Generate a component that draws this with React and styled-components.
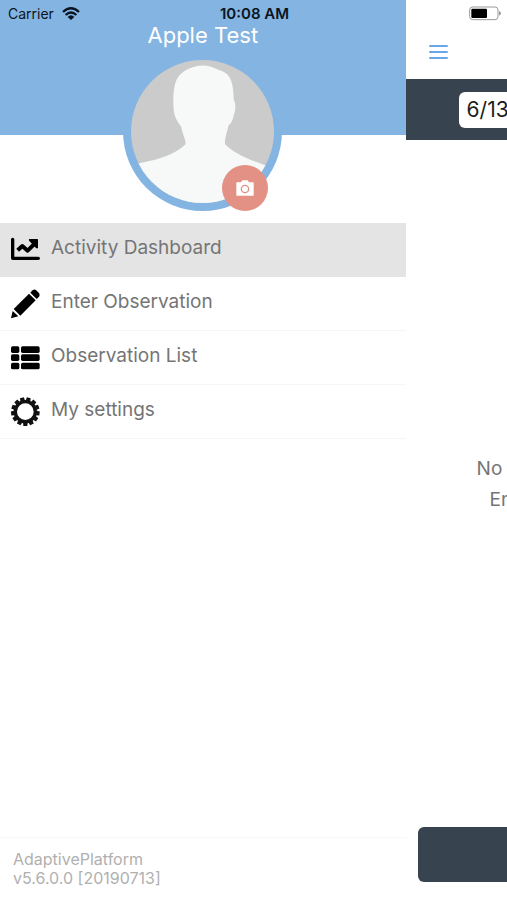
import React, { useState } from 'react'
import styled, { createGlobalStyle } from 'styled-components'

const menuItems = [
    { id: 'dashboard', label: 'Activity Dashboard', Icon: ChartIcon },
    { id: 'enter', label: 'Enter Observation', Icon: PencilIcon },
    { id: 'list', label: 'Observation List', Icon: ListIcon },
    { id: 'settings', label: 'My settings', Icon: GearIcon },
]

function ChartIcon() {
    return (
        <svg viewBox='0 0 90 90' width='30' height='30' aria-hidden='true'>
            <path d='M8 13V70H85' fill='none' stroke='#000' strokeWidth='10' strokeLinejoin='round' strokeLinecap='round' />
            <path d='M23 46L37 33L53 47L73 27' fill='none' stroke='#000' strokeWidth='12' strokeLinejoin='round' />
            <path d='M58 12H82Q84 12 84 14V38Q82 42 78 39L58 18Q55 14 58 12Z' />
        </svg>
    )
}

function PencilIcon() {
    return (
        <svg viewBox='0 0 90 90' width='30' height='30' aria-hidden='true'>
            <path d='M3 88L8 66L25 82Z' />
            <path d='M11 60L57 14L77 34L31 80Z' />
            <path d='M61 11L68 4Q74 -1 80 5L86 11Q91 17 87 23L80 30Z' />
        </svg>
    )
}

function ListIcon() {
    return (
        <svg viewBox='0 0 90 90' width='30' height='30' aria-hidden='true'>
            {[10, 34, 59].map((y) => (
                <g key={y}>
                    <rect x='3' y={y} width='25' height='20' rx='5' />
                    <rect x='33' y={y} width='56' height='20' rx='5' />
                </g>
            ))}
        </svg>
    )
}

function GearIcon() {
    const teeth = Array.from({ length: 13 }, (_, i) => 180 + (i * 360) / 13)
    return (
        <svg viewBox='0 0 90 90' width='30' height='30' aria-hidden='true'>
            <circle cx='46' cy='44' r='30' fill='none' stroke='#111' strokeWidth='10' />
            {teeth.map((angle) => (
                <path key={angle} d='M39 13L40 1H52L53 13Z' fill='#111' transform={`rotate(${angle} 46 44)`} />
            ))}
        </svg>
    )
}

function WifiIcon() {
    return (
        <svg viewBox='0 0 54 39' width='18' height='13' aria-hidden='true'>
            <g fill='none' stroke='#0b1420' strokeWidth='7'>
                <path d='M3 15Q27 -7 51 15' />
                <path d='M11 24Q27 9 43 24' />
            </g>
            <path d='M17 30Q27 20 37 30L27 39Z' fill='#0b1420' />
        </svg>
    )
}

function BatteryIcon() {
    return (
        <svg viewBox='0 0 96 45' width='32' height='15' aria-hidden='true'>
            <rect x='2' y='3' width='85' height='38' rx='9' fill='#fff' stroke='#999' strokeWidth='3' />
            <rect x='7' y='8' width='47' height='28' rx='3' />
            <path d='M90 15Q96 18 96 22Q96 26 90 29Z' fill='#999' />
        </svg>
    )
}

function CameraIcon() {
    return (
        <svg viewBox='0 0 54 48' width='18' height='16' aria-hidden='true'>
            <path d='M3 7H15L19 1H35L39 7H51Q53 7 53 9V45Q53 47 51 47H3Q1 47 1 45V9Q1 7 3 7Z' fill='#fff' />
            <circle cx='27' cy='27' r='11' fill='none' stroke='#e29184' strokeWidth='4' />
        </svg>
    )
}

function Silhouette() {
    return (
        <svg viewBox='64 45 430 430' width='100%' height='100%' aria-hidden='true'>
            <path
                fill='#f6f9f8'
                d='M60 361C130 348 190 335 228 298C229 285 219 270 215 246C202 228 195 216 193 200C190 170 190 140 197 115C208 80 245 60 290 62C312 64 322 75 336 77C365 88 372 115 373 165C379 172 379 195 374 207C370 226 366 236 357 242C353 265 344 283 347 298C375 326 410 342 500 372V500H60Z'
            />
        </svg>
    )
}

const App = () => {
    const [active, setActive] = useState('dashboard')
    const [date, setDate] = useState('6/13')

    return (
        <>
            <GlobalStyle />
            <Screen>
                <StatusBar>
                    <Carrier>Carrier <WifiIcon /></Carrier>
                    <Clock>10:08 AM</Clock>
                    <BatteryIcon />
                </StatusBar>

                <Drawer>
                    <Profile>
                        <UserName>Apple Test</UserName>
                        <Avatar>
                            <Photo><Silhouette /></Photo>
                            <CameraButton type='button' aria-label='Change photo'>
                                <CameraIcon />
                            </CameraButton>
                        </Avatar>
                    </Profile>
                    <nav>
                        {menuItems.map(({ id, label, Icon }) => (
                            <MenuButton key={id} type='button' $active={id === active} onClick={() => setActive(id)}>
                                <Icon />
                                <span>{label}</span>
                            </MenuButton>
                        ))}
                    </nav>
                    <Version>
                        AdaptivePlatform<br />
                        v5.6.0.0 [20190713]
                    </Version>
                </Drawer>

                <Page>
                    <TopBar>
                        <ToggleButton type='button' aria-label='Menu'>
                            <svg viewBox='0 0 20 18' width='20' height='18' aria-hidden='true'>
                                <path d='M1 3H18M1 9H18M1 15H18' stroke='#6ba6ea' strokeWidth='2' strokeLinecap='round' />
                            </svg>
                        </ToggleButton>
                    </TopBar>
                    <DateBar>
                        <DateInput aria-label='Date' value={date} onChange={(e) => setDate(e.target.value)} />
                    </DateBar>
                    <Empty>
                        <EmptyLine $indent='71px'>No</EmptyLine>
                        <EmptyLine $indent='84px'>En</EmptyLine>
                    </Empty>
                    <ActionButton type='button' aria-label='Enter Observation' />
                </Page>
            </Screen>
        </>
    )
}

const GlobalStyle = createGlobalStyle`
* {
  box-sizing: border-box;
}
body {
  margin: 0;
  background: #fff;
  font-family: Inter, 'Liberation Sans', sans-serif;
}
button, input {
  font: inherit;
  border: 0;
}
svg {
  display: block;
  flex: none;
}
`

const Screen = styled.div`
position: relative;
display: flex;
min-height: 100vh;
overflow: hidden;
`

const StatusBar = styled.header`
position: absolute;
top: 0;
left: 0;
right: 0;
display: grid;
grid-template-columns: 1fr auto 1fr;
align-items: center;
height: 27px;
padding: 0 6px 0 8px;
font-size: 14px;
color: #0b1420;

> svg{
  justify-self: end;
}
`

const Carrier = styled.span`
display: flex;
align-items: center;
gap: 8px;
`

const Clock = styled.span`
font-size: 15px;
font-weight: 600;
`

const Drawer = styled.aside`
display: flex;
flex-direction: column;
flex: 0 0 80%;
`

const Profile = styled.section`
display: flex;
flex-direction: column;
align-items: center;
gap: 3px;
padding: 22px 0 12px;
background: linear-gradient(#83b4e2 135px, #fff 135px);
`

const UserName = styled.h1`
margin: 0;
font-size: 22px;
line-height: 27px;
font-weight: 400;
color: #fff;
`

const Avatar = styled.div`
position: relative;
width: 159px;
height: 159px;
padding: 8px;
border-radius: 50%;
background: #83b4e2;
`

const Photo = styled.div`
height: 100%;
border-radius: 50%;
overflow: hidden;
background: #cbcbcb;
`

const CameraButton = styled.button`
position: absolute;
right: 14px;
bottom: 0;
display: flex;
align-items: center;
justify-content: center;
width: 46px;
height: 46px;
padding: 0;
border-radius: 50%;
background: #e29184;
`

const MenuButton = styled.button`
display: flex;
align-items: center;
gap: 11px;
width: 100%;
height: 54px;
padding: 0 10px;
font-size: 19px;
text-align: left;
color: #757575;
background: ${({ $active }) => ($active ? '#e4e4e4' : '#fff')};
box-shadow: inset 0 -1px ${({ $active }) => ($active ? '#e4e4e4' : '#f6f6f6')};

span{
  padding-bottom: 6px;
}
`

const Version = styled.footer`
margin-top: auto;
padding: 12px 13px;
border-top: 1px solid #f8f8f8;
font-size: 16px;
line-height: 19px;
color: #b0b0b0;
`

const Page = styled.main`
display: flex;
flex-direction: column;
flex: 1;
min-width: 0;
overflow: hidden;
`

const TopBar = styled.div`
display: flex;
align-items: flex-end;
height: 79px;
padding: 0 23px 18px;
`

const ToggleButton = styled.button`
padding: 0;
background: none;
`

const DateBar = styled.div`
display: flex;
align-items: center;
height: 61px;
padding-left: 53px;
background: #37434f;
`

const DateInput = styled.input`
flex: 1;
min-width: 120px;
height: 36px;
padding: 0 8px;
border-radius: 6px;
font-size: 21px;
color: #1c1c1c;
background: #fff;
`

const Empty = styled.div`
display: flex;
flex-direction: column;
flex: 1;
justify-content: center;
`

const EmptyLine = styled.p`
margin: 0;
padding-left: ${({ $indent }) => $indent};
font-size: 19px;
line-height: 31px;
white-space: nowrap;
color: #757575;
`

const ActionButton = styled.button`
flex: none;
width: 100vw;
height: 55px;
margin: 0 12px 18px;
border-radius: 6px;
background: #37434f;
`

export default App
